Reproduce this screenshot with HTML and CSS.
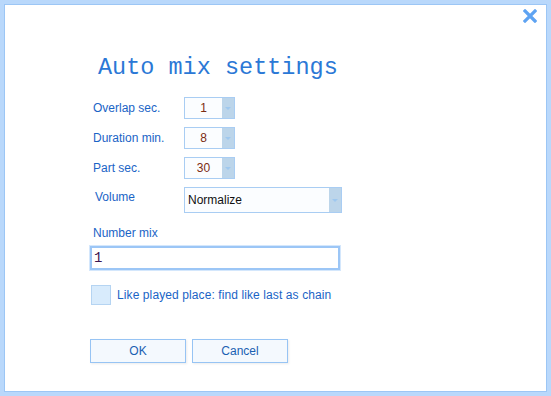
FILE: index.html
```html
<!DOCTYPE html>
<html lang="en">
<head>
    <meta charset="UTF-8">
    <title>Auto mix settings</title>
    <link rel="stylesheet" href="styles.css">
</head>
<body>
    <div class="dialog">
        <span class="close" title="Close">
            <svg width="14" height="14" viewBox="0 0 14 14"><path d="M2 2 L12 12 M12 2 L2 12" stroke="#5ea3f2" stroke-width="3.2" stroke-linecap="square"/></svg>
        </span>

        <div class="content">
            <h1>Auto mix settings</h1>

            <div class="form-grid">
                <label>Overlap sec.</label>
                <div class="combo small"><span class="val">1</span><span class="arrow"></span></div>

                <label>Duration min.</label>
                <div class="combo small"><span class="val">8</span><span class="arrow"></span></div>

                <label>Part sec.</label>
                <div class="combo small"><span class="val">30</span><span class="arrow"></span></div>

                <label class="tall">Volume</label>
                <div class="combo wide"><span class="val text">Normalize</span><span class="arrow"></span></div>
            </div>

            <label class="field-label" for="num">Number mix</label>
            <input type="text" id="num" class="num-input" value="1">

            <div class="check-row">
                <span class="check"></span>
                <span class="check-text">Like played place: find like last as chain</span>
            </div>

            <div class="buttons">
                <button class="btn">OK</button>
                <button class="btn">Cancel</button>
            </div>
        </div>
    </div>
</body>
</html>
```

FILE: styles.css
```css
html, body {
    margin: 0;
    padding: 0;
    background: #fff;
}
body {
    font-family: "Liberation Sans", Arial, sans-serif;
    font-size: 12px;
    color: #1a64c6;
}
.dialog {
    position: relative;
    width: 551px;
    height: 396px;
    box-sizing: border-box;
    border: 4px solid #b9d8fb;
    box-shadow: inset 0 0 0 1px #9cc6f5;
    background: #fff;
}
.close {
    position: absolute;
    top: 5px;
    right: 10px;
    width: 14px;
    height: 14px;
}
.content {
    padding: 50px 0 0 86px;
}
h1 {
    margin: 0 0 15px 8px;
    font-family: "Liberation Mono", "Courier New", monospace;
    font-weight: normal;
    font-size: 23.5px;
    line-height: 28px;
    color: #2b78d6;
}
.form-grid {
    display: grid;
    grid-template-columns: 91px auto;
    row-gap: 8px;
    align-items: center;
    margin-left: 3px;
}
.form-grid label {
    line-height: 14px;
}
.form-grid label.tall {
    align-self: start;
    padding-top: 3px;
    margin-left: 2px;
}
.combo {
    display: flex;
    height: 22px;
    box-sizing: border-box;
    border: 1px solid #a9cdf3;
    background: #fbfdff;
}
.combo.small {
    width: 51px;
}
.combo.wide {
    width: 158px;
    height: 26px;
}
.combo .val {
    flex: 1;
    display: flex;
    align-items: center;
    justify-content: center;
    color: #7b2c12;
    font-size: 12px;
}
.combo .val.text {
    justify-content: flex-start;
    padding-left: 3px;
    color: #111;
}
.combo .arrow {
    position: relative;
    width: 12px;
    background: #bcd5ea;
}
.combo .arrow::after {
    content: "";
    position: absolute;
    left: 3px;
    top: 50%;
    margin-top: -1px;
    border-left: 3px solid transparent;
    border-right: 3px solid transparent;
    border-top: 3px solid #9ec8ef;
}
.field-label {
    display: block;
    margin: 13px 0 6px 3px;
    line-height: 14px;
}
.num-input {
    display: block;
    margin-left: 0;
    width: 250px;
    height: 24px;
    box-sizing: border-box;
    border: 2px solid #9cc6f6;
    box-shadow: 0 0 0 1px #d4e7fc;
    padding: 0 2px;
    font-family: "Liberation Mono", "Courier New", monospace;
    font-size: 14px;
    color: #3a1450;
    outline: none;
}
.check-row {
    display: flex;
    align-items: center;
    gap: 6px;
    margin: 15px 0 0 1px;
}
.check {
    width: 20px;
    height: 20px;
    box-sizing: border-box;
    background: #d8ebfc;
    border: 1px solid #b5d4f2;
}
.check-text {
    letter-spacing: 0.1px;
}
.buttons {
    display: flex;
    gap: 6px;
    margin: 34px 0 0 0;
}
.btn {
    width: 96px;
    height: 24px;
    box-sizing: border-box;
    border: 1px solid #97c4f4;
    background: #f4f9fe;
    box-shadow: 1px 1px 2px rgba(0,0,0,0.08);
    font-family: "Liberation Sans", Arial, sans-serif;
    font-size: 12px;
    color: #1a5fb2;
    padding: 0;
}
```
